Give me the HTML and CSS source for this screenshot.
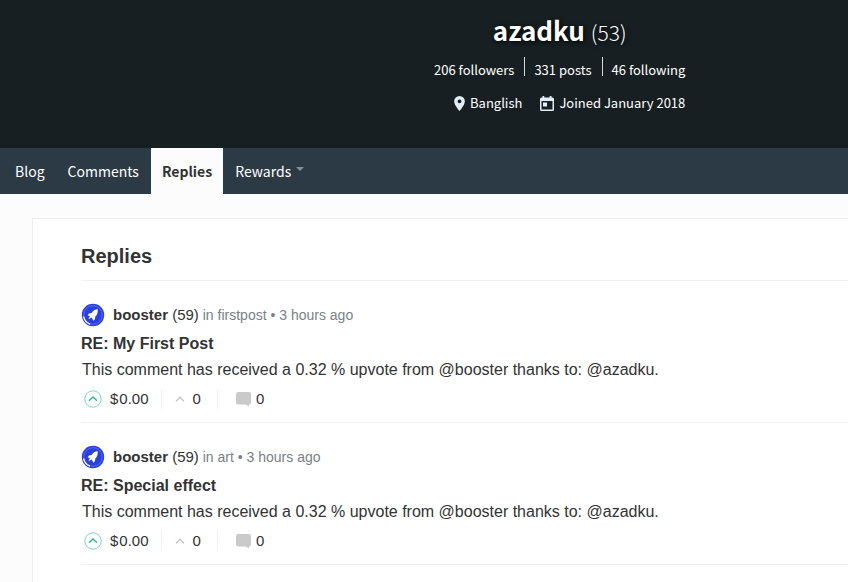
FILE: index.html
```html
<!DOCTYPE html>
<html lang="en">
<head>
  <meta charset="UTF-8">
  <meta name="viewport" content="width=device-width, initial-scale=1.0">
  <title>Replies to azadku</title>
  <link rel="stylesheet" href="styles.css">
</head>
<body>

  <!-- shared icons -->
  <svg class="sprite" aria-hidden="true">
    <symbol id="icon-rocket" viewBox="0 0 24 24">
      <circle cx="12" cy="12" r="11.2" fill="#2b40da"/>
      <circle cx="12" cy="12" r="9.3" fill="none" stroke="#6f80ee" stroke-width="0.7"/>
      <path d="M2.6 13.5a9.600 9.600 0 0 0 6.400 7.500" fill="none" stroke="#fff" stroke-width="1.400"/>
      <path d="M16.800 6.200c-2.700.3-4.800 1.300-6.200 3.700l-2.700.7-1.200 2 2.200.3-1.500 3.300 3.200-1.600 1 1.500.5 1.700 1.800-1.500.4-2.700c1.900-1.800 2.600-4.200 2.500-7.400z" fill="#fff"/>
    </symbol>
    <symbol id="icon-upvote" viewBox="0 0 18 18">
      <circle cx="9" cy="9" r="8.200" fill="none" stroke="#7ad6b8" stroke-width="1"/>
      <path d="M5 10.800l4-3.800 4 3.800" fill="none" stroke="#2bb88c" stroke-width="1.300"/>
    </symbol>
    <symbol id="icon-chevron" viewBox="0 0 10 6">
      <path d="M1 5.200l4-4 4 4" fill="none" stroke="#c4c4c4" stroke-width="1.300"/>
    </symbol>
    <symbol id="icon-comment" viewBox="0 0 15 15">
      <path d="M2 0h11A2 2 0 0 1 15 2v8.500a2 2 0 0 1-2 2V14.500L9.500 12.500H2A2 2 0 0 1 0 10.500V2A2 2 0 0 1 2 0z" fill="#cacaca"/>
    </symbol>
  </svg>

  <header class="profile">
    <h1 class="profile-name">azadku <span class="reputation">(53)</span></h1>
    <ul class="profile-stats">
      <li><a href="#">206 followers</a></li>
      <li><a href="#">331 posts</a></li>
      <li><a href="#">46 following</a></li>
    </ul>
    <p class="profile-info">
      <span class="info-item">
        <svg class="pin-icon" viewBox="0 0 10 14"><path d="M5 0a5 5 0 0 0-5 5c0 3.700 5 9 5 9s5-5.300 5-9a5 5 0 0 0-5-5zm0 6.800a1.800 1.800 0 1 1 0-3.600 1.800 1.800 0 0 1 0 3.600z" fill="#e2edf8"/></svg>
        Banglish
      </span>
      <span class="info-item">
        <svg class="calendar-icon" viewBox="0 0 14 15"><path d="M2.500 0h1.800v1.500h5.400V0h1.800v1.500h1A1.500 1.500 0 0 1 14 3v10.500a1.500 1.500 0 0 1-1.500 1.500h-11A1.500 1.500 0 0 1 0 13.500V3a1.500 1.500 0 0 1 1.500-1.500h1zM1.500 5v8.500h11V5zM3 6.500h4v4H3z" fill="#e2edf8" fill-rule="evenodd"/></svg>
        Joined January 2018
      </span>
    </p>
  </header>

  <nav class="nav-bar">
    <ul class="nav-menu">
      <li><a class="nav-link" href="#">Blog</a></li>
      <li><a class="nav-link" href="#">Comments</a></li>
      <li><a class="nav-link active" href="#">Replies</a></li>
      <li><a class="nav-link dropdown" href="#">Rewards</a></li>
    </ul>
  </nav>

  <main class="content">
    <h2 class="content-title">Replies</h2>

    <article class="reply">
      <div class="reply-meta">
        <svg class="avatar"><use href="#icon-rocket"/></svg>
        <p><a class="author" href="#"><strong>booster</strong> (59)</a> in <a href="#">firstpost</a> • 3 hours ago</p>
      </div>
      <h3 class="reply-title"><a href="#">RE: My First Post</a></h3>
      <p class="reply-body">This comment has received a 0.32 % upvote from @booster thanks to: @azadku.</p>
      <div class="reply-footer">
        <div class="payout">
          <button type="button" aria-label="Upvote"><svg class="upvote-icon"><use href="#icon-upvote"/></svg></button>
          <span class="amount"><span>$</span><span>0.00</span></span>
        </div>
        <div class="votes"><svg class="chevron-icon"><use href="#icon-chevron"/></svg>0</div>
        <a class="comments" href="#"><svg class="comment-icon"><use href="#icon-comment"/></svg>0</a>
      </div>
    </article>

    <article class="reply">
      <div class="reply-meta">
        <svg class="avatar"><use href="#icon-rocket"/></svg>
        <p><a class="author" href="#"><strong>booster</strong> (59)</a> in <a href="#">art</a> • 3 hours ago</p>
      </div>
      <h3 class="reply-title"><a href="#">RE: Special effect</a></h3>
      <p class="reply-body">This comment has received a 0.32 % upvote from @booster thanks to: @azadku.</p>
      <div class="reply-footer">
        <div class="payout">
          <button type="button" aria-label="Upvote"><svg class="upvote-icon"><use href="#icon-upvote"/></svg></button>
          <span class="amount"><span>$</span><span>0.00</span></span>
        </div>
        <div class="votes"><svg class="chevron-icon"><use href="#icon-chevron"/></svg>0</div>
        <a class="comments" href="#"><svg class="comment-icon"><use href="#icon-comment"/></svg>0</a>
      </div>
    </article>
  </main>

</body>
</html>
```

FILE: styles.css
```css
* {
    box-sizing: border-box;
}

body {
    margin: 0;
    background-color: #fcfcfc;
    color: #333;
    font-family: "Liberation Sans", Arial, sans-serif;
    font-size: 16px;
}

h1, h2, h3, p, ul {
    margin: 0;
    padding: 0;
}

ul {
    list-style: none;
}

a {
    color: inherit;
    text-decoration: none;
}

svg {
    display: block;
    flex-shrink: 0;
}

.sprite {
    display: none;
}

/* profile banner */
.profile {
    display: flex;
    flex-direction: column;
    align-items: center;
    padding: 12px 0 35px 32%;
    background-color: #171f22;
    color: white;
    font-family: "Noto Sans CJK SC", "Open Sans", sans-serif;
    font-size: 13px;
}

.profile-name {
    font-size: 26px;
    line-height: 36px;
    font-weight: bold;
    text-shadow: 1px 1px 4px black;
}

.reputation {
    font-size: 21px;
    font-weight: 300;
}

.profile-stats {
    display: flex;
    margin-top: 7px;
    line-height: 19px;
}

.profile-stats li {
    padding: 3px 10px 0;
}

.profile-stats li + li {
    background: linear-gradient(#d5dadd, #d5dadd) left top / 1px 19px no-repeat;
}

.profile-info {
    display: flex;
    gap: 18px;
    margin-top: 14px;
    padding-left: 20px;
    line-height: 20px;
}

.info-item {
    display: flex;
    align-items: center;
    gap: 5px;
}

.pin-icon {
    width: 11px;
    height: 15px;
}

.calendar-icon {
    width: 14px;
    height: 15px;
}

/* tabs */
.nav-bar {
    background-color: #2c3a45;
    color: white;
    font-family: "Noto Sans CJK SC", "Open Sans", sans-serif;
    font-size: 14px;
}

.nav-menu {
    display: flex;
    gap: 1px;
    padding-left: 4px;
}

.nav-link {
    display: block;
    padding: 0 11px;
    line-height: 46px;
}

.nav-link.active {
    background-color: #fcfcfc;
    color: #333;
    font-weight: bold;
}

.dropdown {
    display: flex;
    gap: 5px;
}

.dropdown::after {
    content: "";
    align-self: flex-start;
    margin-top: 19px;
    border: 4px solid transparent;
    border-top-color: #84909a;
    border-bottom: none;
}

/* replies list */
.content {
    margin: 24px 0 0 32px;
    padding: 24px 0 24px 48px;
    background-color: white;
    border: 1px solid #eee;
    border-right: none;
}

.content-title {
    padding-bottom: 11px;
    border-bottom: 1px solid #f0f0f0;
    font-size: 20px;
    line-height: 26px;
}

.reply {
    padding: 22px 0 13px;
    border-bottom: 1px solid #f0f0f0;
}

.reply-meta {
    display: flex;
    align-items: center;
    gap: 8px;
    color: #788187;
    font-size: 14px;
    line-height: 24px;
}

.avatar {
    width: 24px;
    height: 24px;
}

.author {
    color: #333;
    font-size: 15px;
}

.reply-title {
    margin-top: 4px;
    font-size: 16px;
    line-height: 26px;
}

.reply-body {
    padding-left: 1px;
    line-height: 26px;
}

.reply-footer {
    display: flex;
    align-items: center;
    padding: 6px 0 0 3px;
    font-size: 15px;
    line-height: 20px;
}

.payout, .votes, .comments {
    display: flex;
    align-items: center;
}

.payout {
    gap: 8px;
    padding-right: 12px;
    border-right: 1px solid #f0f0f0;
}

.payout button {
    padding: 0;
    border: none;
    background: none;
    cursor: pointer;
}

.amount {
    display: flex;
    gap: 1px;
}

.upvote-icon {
    width: 18px;
    height: 18px;
}

.votes {
    gap: 8px;
    padding: 0 16px 0 13px;
    border-right: 1px solid #f0f0f0;
}

.chevron-icon {
    width: 10px;
    height: 6px;
}

.comments {
    gap: 5px;
    padding-left: 18px;
}

.comment-icon {
    width: 15px;
    height: 15px;
}
```
